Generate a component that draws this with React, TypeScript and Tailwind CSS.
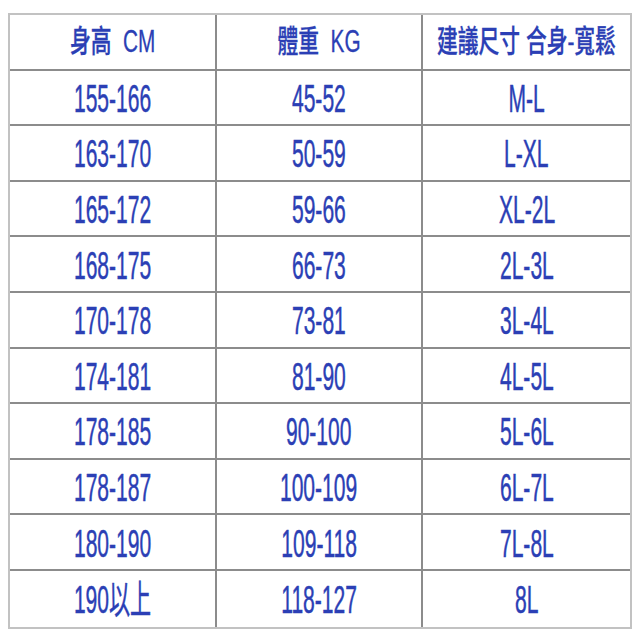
const headers = ['身高  CM', '體重  KG', '建議尺寸 合身-寬鬆'];

const rows: [string, string, string][] = [
  ['155-166', '45-52', 'M-L'],
  ['163-170', '50-59', 'L-XL'],
  ['165-172', '59-66', 'XL-2L'],
  ['168-175', '66-73', '2L-3L'],
  ['170-178', '73-81', '3L-4L'],
  ['174-181', '81-90', '4L-5L'],
  ['178-185', '90-100', '5L-6L'],
  ['178-187', '100-109', '6L-7L'],
  ['180-190', '109-118', '7L-8L'],
  ['190以上', '118-127', '8L'],
];

function Cell({ text, header, lastCol, lastRow }: { text: string; header?: boolean; lastCol: boolean; lastRow: boolean }) {
  return (
    <div
      className={
        'flex h-[55.6px] items-center justify-center overflow-visible border-[#8c8c8c] ' +
        (lastCol ? '' : 'border-r-2 ') +
        (lastRow ? '' : 'border-b-2')
      }
    >
      {header ? (
        <span className="inline-block whitespace-pre text-[31px] font-medium leading-none scale-x-[0.67] [-webkit-text-stroke:0.3px_#2b3fb5]">
          {text}
        </span>
      ) : (
        <span className="inline-block whitespace-pre text-[39px] leading-none scale-x-[0.54] mt-[2px] [-webkit-text-stroke:0.5px_#2b3fb5]">
          {text}
        </span>
      )}
    </div>
  );
}

export default function App() {
  const all = [headers as [string, string, string], ...rows];
  return (
    <div
      className="w-[640px] h-[640px] bg-white pt-[13px] pl-[8px] text-[#2b3fb5]"
      style={{ fontFamily: '"Liberation Sans", "Noto Sans CJK TC", sans-serif' }}
    >
      <div className="grid w-[624px] grid-cols-3 border-2 border-[#c2c2c2]">
        {all.map((row, r) =>
          row.map((text, c) => (
            <Cell key={`${r}-${c}`} text={text} header={r === 0} lastCol={c === 2} lastRow={r === all.length - 1} />
          ))
        )}
      </div>
    </div>
  );
}
